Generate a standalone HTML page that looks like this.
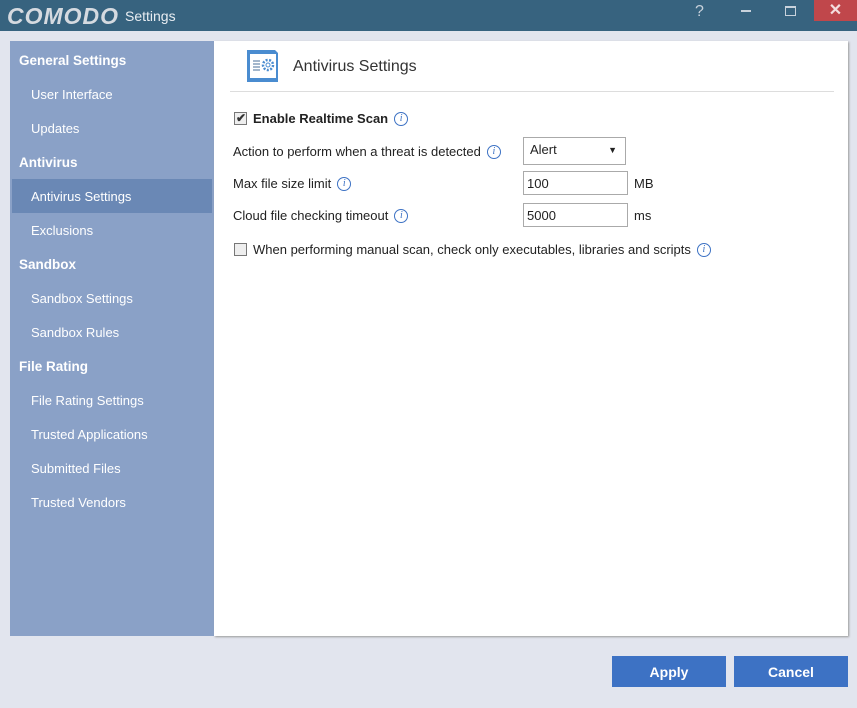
<!DOCTYPE html>
<html><head><style>
*{margin:0;padding:0;box-sizing:border-box}
body{width:857px;height:708px;background:#e2e5ee;font-family:"Liberation Sans",sans-serif;font-size:13px;color:#222;position:relative;overflow:hidden}
.tb{position:absolute;left:0;top:0;width:857px;height:31px;background:#37637f}
.logo{position:absolute;left:7px;top:3px;font:italic bold 23px "Liberation Sans",sans-serif;color:#d5dae0;letter-spacing:1px}
.set{position:absolute;left:125px;top:8px;color:#e8edf2;font-size:14px}
.close{position:absolute;left:814px;top:0;width:43px;height:21px;background:#c0474b;color:#f4dede;font:bold 16px sans-serif;text-align:center;line-height:21px}
.ab{position:absolute;color:#c8d2dc}
.side{position:absolute;left:10px;top:41px;width:204px;height:595px;background:#8aa1c7}
.side div{position:absolute;left:0;width:204px;color:#fff;height:34px;line-height:36px}
.h{font-weight:bold;padding-left:9px;font-size:13.5px}
.i{padding-left:21px}
.sel{background:#6a88b5;left:2px!important;width:200px!important}
.main{position:absolute;left:214px;top:41px;width:634px;height:595px;background:#fff;box-shadow:1px 1px 2px #999}
.a{position:absolute;white-space:nowrap;line-height:16px}
.info{display:inline-block;width:14px;height:14px;border:1px solid #3d72c4;border-radius:50%;color:#3d72c4;font:italic 10px "Liberation Serif",serif;text-align:center;line-height:12px;vertical-align:top;margin-left:6px;margin-top:1px}
.box{position:absolute;border:1px solid #aaa;height:24px;line-height:22px;padding-left:3px;background:#fff}
.cb{display:inline-block;width:13px;height:13px;border:1px solid #777;background:#eee;vertical-align:top;margin-top:1px;margin-right:6px;position:relative}
.btn{position:absolute;top:656px;width:114px;height:31px;background:#3d72c4;color:#fff;font-weight:bold;font-size:14px;text-align:center;line-height:32px}
</style></head><body>
<div class="tb"><span class="logo">COMODO</span><span class="set">Settings</span>
<span class="ab" style="left:695px;top:3px;font-size:16px">?</span>
<span class="ab" style="left:741px;top:10px;width:10px;height:2px;background:#c8d2dc"></span>
<span class="ab" style="left:785px;top:6px;width:11px;height:10px;border:1px solid #c8d2dc;border-top-width:2px"></span>
<div class="close">✕</div></div>
<div class="side">
<div class="h" style="top:2px">General Settings</div>
<div class="i" style="top:36px">User Interface</div>
<div class="i" style="top:70px">Updates</div>
<div class="h" style="top:104px">Antivirus</div>
<div class="i sel" style="top:138px;padding-left:19px">Antivirus Settings</div>
<div class="i" style="top:172px">Exclusions</div>
<div class="h" style="top:206px">Sandbox</div>
<div class="i" style="top:240px">Sandbox Settings</div>
<div class="i" style="top:274px">Sandbox Rules</div>
<div class="h" style="top:308px">File Rating</div>
<div class="i" style="top:342px">File Rating Settings</div>
<div class="i" style="top:376px">Trusted Applications</div>
<div class="i" style="top:410px">Submitted Files</div>
<div class="i" style="top:444px">Trusted Vendors</div>
</div>
<div class="main">
<svg style="position:absolute;left:30px;top:7px" width="36" height="36" viewBox="0 0 36 36">
<path d="M3 2h28l3 3v29H3z" fill="#4a8cd0"/><rect x="6" y="6" width="26" height="24" fill="#fff"/>
<g stroke="#4a6f98" stroke-width="1"><line x1="9" y1="13" x2="16" y2="13"/><line x1="9" y1="16" x2="16" y2="16"/><line x1="9" y1="19" x2="16" y2="19"/><line x1="9" y1="22" x2="16" y2="22"/></g>
<circle cx="24" cy="17" r="5" fill="none" stroke="#4a8cd0" stroke-width="2.5" stroke-dasharray="2 1.5"/><circle cx="24" cy="17" r="2" fill="none" stroke="#4a8cd0"/>
</svg>
<div class="a" style="left:79px;top:17px;font-size:16px;color:#333;line-height:18px">Antivirus Settings</div>
<div class="a" style="left:16px;top:50px;width:604px;height:1px;background:#ddd"></div>
<div class="a" style="left:20px;top:70px;font-weight:bold"><span class="cb"><span style="position:absolute;left:1px;top:-3px;font-size:12px;color:#333">✔</span></span>Enable Realtime Scan<span class="info">i</span></div>
<div class="a" style="left:19px;top:103px">Action to perform when a threat is detected<span class="info">i</span></div>
<div class="box" style="left:309px;top:96px;width:103px;height:28px;line-height:24px;padding-left:6px">Alert<span style="position:absolute;right:8px;top:0;font-size:9px">▼</span></div>
<div class="a" style="left:19px;top:135px">Max file size limit<span class="info">i</span></div>
<div class="box" style="left:309px;top:130px;width:105px;line-height:24px">100</div><div class="a" style="left:420px;top:135px">MB</div>
<div class="a" style="left:19px;top:167px">Cloud file checking timeout<span class="info">i</span></div>
<div class="box" style="left:309px;top:162px;width:105px;line-height:24px">5000</div><div class="a" style="left:420px;top:167px">ms</div>
<div class="a" style="left:20px;top:201px"><span class="cb"></span>When performing manual scan, check only executables, libraries and scripts<span class="info">i</span></div>
</div>
<div class="btn" style="left:612px">Apply</div>
<div class="btn" style="left:734px">Cancel</div>
</body></html>
